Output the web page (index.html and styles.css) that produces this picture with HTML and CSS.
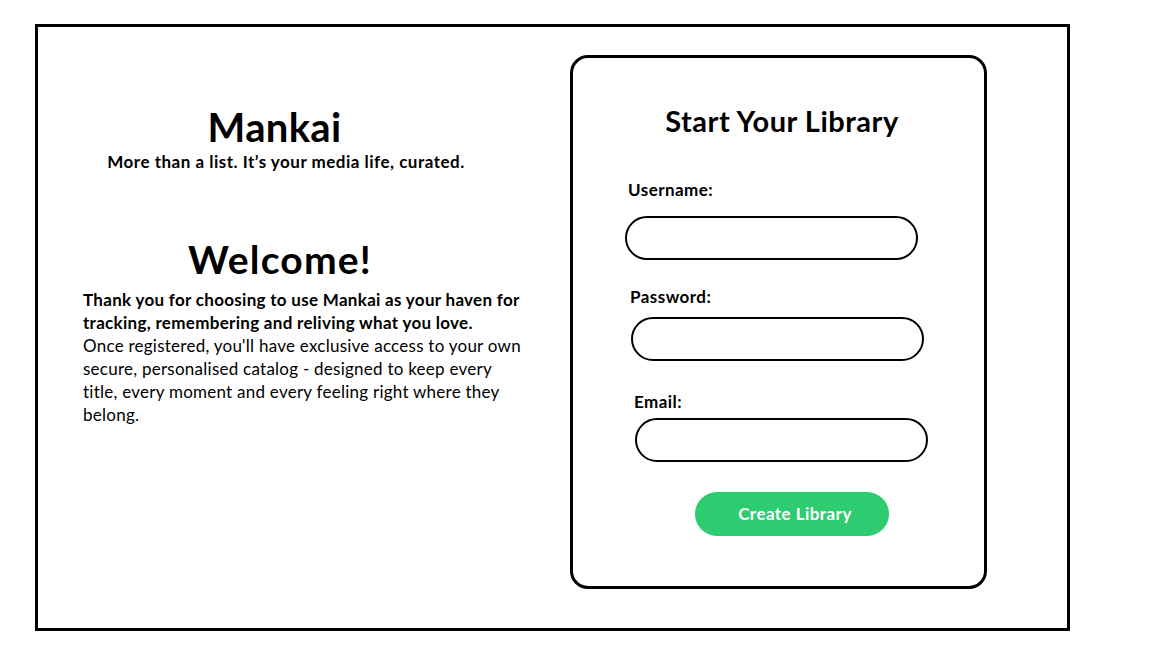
FILE: index.html
```html
<!DOCTYPE html>
<html lang="en">
<head>
<meta charset="utf-8">
<title>Mankai - Start Your Library</title>
<link rel="stylesheet" href="styles.css">
</head>
<body>
<div class="frame">
  <section class="intro">
    <h1 class="brand">Mankai</h1>
    <p class="tagline">More than a list. It’s your media life, curated.</p>
    <h2 class="welcome">Welcome!</h2>
    <p class="copy"><strong>Thank you for choosing to use Mankai as your haven for tracking, remembering and reliving what you love.</strong><br>Once registered, you'll have exclusive access to your own secure, personalised catalog - designed to keep every title, every moment and every feeling right where they belong.</p>
  </section>
  <form class="card">
    <h2 class="card-title">Start Your Library</h2>
    <label class="lbl lbl-user" for="u">Username:</label>
    <input class="field field-user" id="u" type="text">
    <label class="lbl lbl-pass" for="p">Password:</label>
    <input class="field field-pass" id="p" type="password">
    <label class="lbl lbl-mail" for="e">Email:</label>
    <input class="field field-mail" id="e" type="email">
    <button class="btn" type="button">Create Library</button>
  </form>
</div>
</body>
</html>
```
FILE: styles.css
```css
* { box-sizing: border-box; }
html, body { margin: 0; padding: 0; background: #fff; }
body {
  font-family: Lato, "Liberation Sans", sans-serif;
  color: #000;
  padding: 24px 0 0 35px;
}
.frame {
  width: 1035px;
  height: 607px;
  border: 3px solid #000;
  display: flex;
  align-items: flex-start;
}
.intro {
  width: 532px;
  padding: 77px 0 0 45px;
}
.brand {
  margin: 0;
  width: 383px;
  text-align: center;
  font-size: 40px;
  line-height: 46px;
  letter-spacing: 0.3px;
  font-weight: 700;
}
.tagline {
  margin: 2px 0 0;
  width: 406px;
  text-align: center;
  font-size: 17px;
  line-height: 20px;
  letter-spacing: 0.5px;
  font-weight: 700;
}
.welcome {
  margin: 65px 0 0;
  width: 394px;
  text-align: center;
  font-size: 39px;
  line-height: 44px;
  letter-spacing: 1.2px;
  font-weight: 700;
}
.copy {
  margin: 7px 0 0;
  width: 444px;
  font-size: 17px;
  line-height: 23px;
  letter-spacing: 0.25px;
}
.copy strong { font-weight: 700; letter-spacing: 0.3px; }
.card {
  margin-top: 28px;
  width: 417px;
  height: 534px;
  border: 3px solid #000;
  border-radius: 18px;
  padding-top: 46px;
  display: flex;
  flex-direction: column;
  align-items: flex-start;
}
.card-title {
  margin: 0;
  align-self: stretch;
  text-align: center;
  padding-left: 7px;
  font-size: 29px;
  line-height: 34px;
  letter-spacing: 0.5px;
  font-weight: 700;
}
.lbl {
  display: block;
  font-size: 17px;
  line-height: 20px;
  letter-spacing: 0.45px;
  font-weight: 700;
}
.lbl-user { margin: 42px 0 0 55px; }
.lbl-pass { margin: 27px 0 0 57px; }
.lbl-mail { margin: 31px 0 0 61px; }
.field {
  display: block;
  width: 293px;
  height: 44px;
  border: 2px solid #000;
  border-radius: 22px;
  background: #fff;
  font: inherit;
  padding: 0 16px;
}
.field-user { margin: 16px 0 0 52px; }
.field-pass { margin: 10px 0 0 58px; }
.field-mail { margin: 6px 0 0 62px; }
.btn {
  margin: 30px 0 0 122px;
  width: 194px;
  height: 44px;
  border: 0;
  border-radius: 22px;
  background: #2ecc71;
  color: #fff;
  font-family: inherit;
  font-size: 17px;
  letter-spacing: 0.45px;
  font-weight: 700;
  padding: 0 0 2px 6px;
}
```
